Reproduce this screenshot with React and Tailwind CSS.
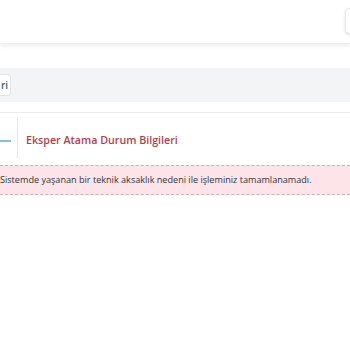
import React from 'react'

const FONT = { fontFamily: '"Open Sans", "Noto Sans", sans-serif' }

export default function App() {
  return (
    <div className="w-[350px] h-[350px] overflow-hidden bg-white" style={FONT}>
      {/* top bar */}
      <div className="h-[44px] flex justify-end items-start pt-[8px] shadow-[0_2px_4px_rgba(0,0,0,0.07)] border-b border-[#eeeeee]">
        <div className="w-[8px] h-[26px] -mr-[3px] rounded-l border border-[#e6e6e6] bg-white shadow-sm"></div>
      </div>

      {/* breadcrumb band */}
      <div className="mt-[24px] h-[34px] bg-[#f3f4f6] flex items-center">
        <div className="h-[22px] w-[11px] bg-white border border-l-0 border-[#e2e4e8] rounded-r-sm flex items-center justify-end pr-[2px] overflow-hidden">
          <span className="text-[10px] text-[#3b5b86] leading-none font-semibold">ri</span>
        </div>
      </div>

      {/* card */}
      <div className="mt-[10px] border-t border-[#ececec]">
        <div className="flex items-stretch h-[52px] pt-[5px]">
          <div className="w-[12px] flex items-center">
            <div className="w-[11px] h-[2px] bg-[#7fc4d8] -mt-[2px]"></div>
          </div>
          <div className="ml-[5px] w-px bg-[#e8e8e8] self-stretch mb-[7px]"></div>
          <div className="ml-[8px] flex items-center pb-[3px]">
            <span className="text-[10.7px] font-semibold text-[#b23e4c]">Eksper Atama Durum Bilgileri</span>
          </div>
        </div>
        <div className="h-[30px] bg-[#fde4e8] border-y border-dashed border-[#c9b4b8] flex items-center">
          <span className="text-[9.1px] text-[#333] whitespace-nowrap">
            Sistemde yaşanan bir teknik aksaklık nedeni ile işleminiz tamamlanamadı.
          </span>
        </div>
      </div>
    </div>
  )
}
